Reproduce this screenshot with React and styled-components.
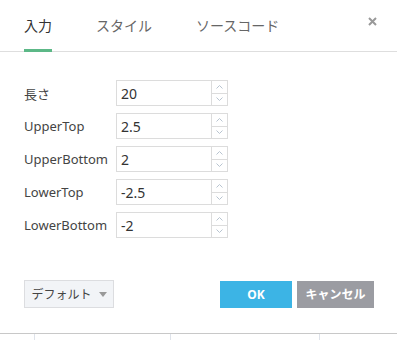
import React from 'react';
import styled, { createGlobalStyle } from 'styled-components';

const GlobalStyle = createGlobalStyle`
  body {
    margin: 0;
    background: #fff;
    font-family: "Noto Sans", "Noto Sans CJK JP", sans-serif;
  }
`;

const Dialog = styled.div`
  width: 397px;
  height: 334px;
  border-bottom: 1px solid #c8c8c8;
  display: flex;
  flex-direction: column;
  box-sizing: border-box;
  background: #fff;
`;

const Header = styled.div`
  display: flex;
  align-items: stretch;
  height: 52px;
  padding: 0 20px 0 24px;
  border-bottom: 1px solid #dedede;
  box-sizing: border-box;
`;

const Tab = styled.div`
  display: flex;
  align-items: center;
  margin-right: 44px;
  font-size: 14px;
  color: ${p => (p.$active ? '#333' : '#666')};
  border-bottom: 3px solid ${p => (p.$active ? '#5cb887' : 'transparent')};
  margin-bottom: -1px;
  padding-top: 1px;
`;

const Close = styled.div`
  margin-left: auto;
  display: flex;
  align-items: center;
  padding-bottom: 8px;
  color: #999;
`;

const Body = styled.div`
  padding: 28px 24px 0;
  display: flex;
  flex-direction: column;
  gap: 7px;
`;

const Row = styled.div`
  display: flex;
  align-items: center;
`;

const Label = styled.div`
  width: 92px;
  font-size: 13px;
  color: #444;
`;

const Spin = styled.div`
  display: flex;
  width: 112px;
  height: 26px;
  border: 1px solid #dcdcdc;
  box-sizing: border-box;
`;

const Value = styled.div`
  flex: 1;
  display: flex;
  align-items: center;
  padding-left: 4px;
  font-size: 14px;
  color: #333;
`;

const Arrows = styled.div`
  width: 15px;
  display: flex;
  flex-direction: column;
  border-left: 1px solid #dcdcdc;
`;

const Arrow = styled.div`
  flex: 1;
  display: flex;
  align-items: center;
  justify-content: center;
  & + & {
    border-top: 1px solid #dcdcdc;
  }
`;

const Footer = styled.div`
  display: flex;
  align-items: center;
  padding: 42px 23px 0 24px;
`;

const DefaultButton = styled.div`
  width: 90px;
  height: 28px;
  box-sizing: border-box;
  border: 1px solid #dcdde0;
  background: #f2f4f7;
  display: flex;
  align-items: center;
  justify-content: center;
  gap: 7px;
  font-size: 12px;
  color: #444;
`;

const Caret = styled.span`
  width: 0;
  height: 0;
  border-left: 4px solid transparent;
  border-right: 4px solid transparent;
  border-top: 5px solid #999;
`;

const Button = styled.div`
  width: ${p => p.$w}px;
  height: 27px;
  display: flex;
  align-items: center;
  justify-content: center;
  font-size: 12px;
  font-weight: bold;
  color: #fff;
  background: ${p => p.$bg};
  margin-left: ${p => p.$ml || 0}px;
`;

const Grid = styled.div`
  display: flex;
  height: 6px;
`;

const Cell = styled.div`
  width: ${p => p.$w}px;
  border-right: 1px solid #dfe3ea;
  box-sizing: border-box;
`;

const rows = [
  ['長さ', '20'],
  ['UpperTop', '2.5'],
  ['UpperBottom', '2'],
  ['LowerTop', '-2.5'],
  ['LowerBottom', '-2'],
];

function Chevron({ up }) {
  return (
    <svg width="7" height="4" viewBox="0 0 7 4">
      <path
        d={up ? 'M0.5 3.5 L3.5 0.5 L6.5 3.5' : 'M0.5 0.5 L3.5 3.5 L6.5 0.5'}
        fill="none"
        stroke="#b8c4d0"
        strokeWidth="1"
      />
    </svg>
  );
}

export default function App() {
  return (
    <>
      <GlobalStyle />
      <Dialog>
        <Header>
          <Tab $active>入力</Tab>
          <Tab>スタイル</Tab>
          <Tab>ソースコード</Tab>
          <Close>
            <svg width="9" height="9" viewBox="0 0 9 9">
              <path d="M1 1 L8 8 M8 1 L1 8" stroke="#999" strokeWidth="2" />
            </svg>
          </Close>
        </Header>
        <Body>
          {rows.map(([label, value]) => (
            <Row key={label}>
              <Label>{label}</Label>
              <Spin>
                <Value>{value}</Value>
                <Arrows>
                  <Arrow><Chevron up /></Arrow>
                  <Arrow><Chevron /></Arrow>
                </Arrows>
              </Spin>
            </Row>
          ))}
        </Body>
        <Footer>
          <DefaultButton>
            デフォルト <Caret />
          </DefaultButton>
          <Button $w={72} $bg="#3cb4e5" style={{ marginLeft: 'auto' }}>OK</Button>
          <Button $w={77} $bg="#9b9ca2" $ml={5}>キャンセル</Button>
        </Footer>
      </Dialog>
      <Grid>
        <Cell $w={35} />
        <Cell $w={136} />
        <Cell $w={149} />
      </Grid>
    </>
  );
}
